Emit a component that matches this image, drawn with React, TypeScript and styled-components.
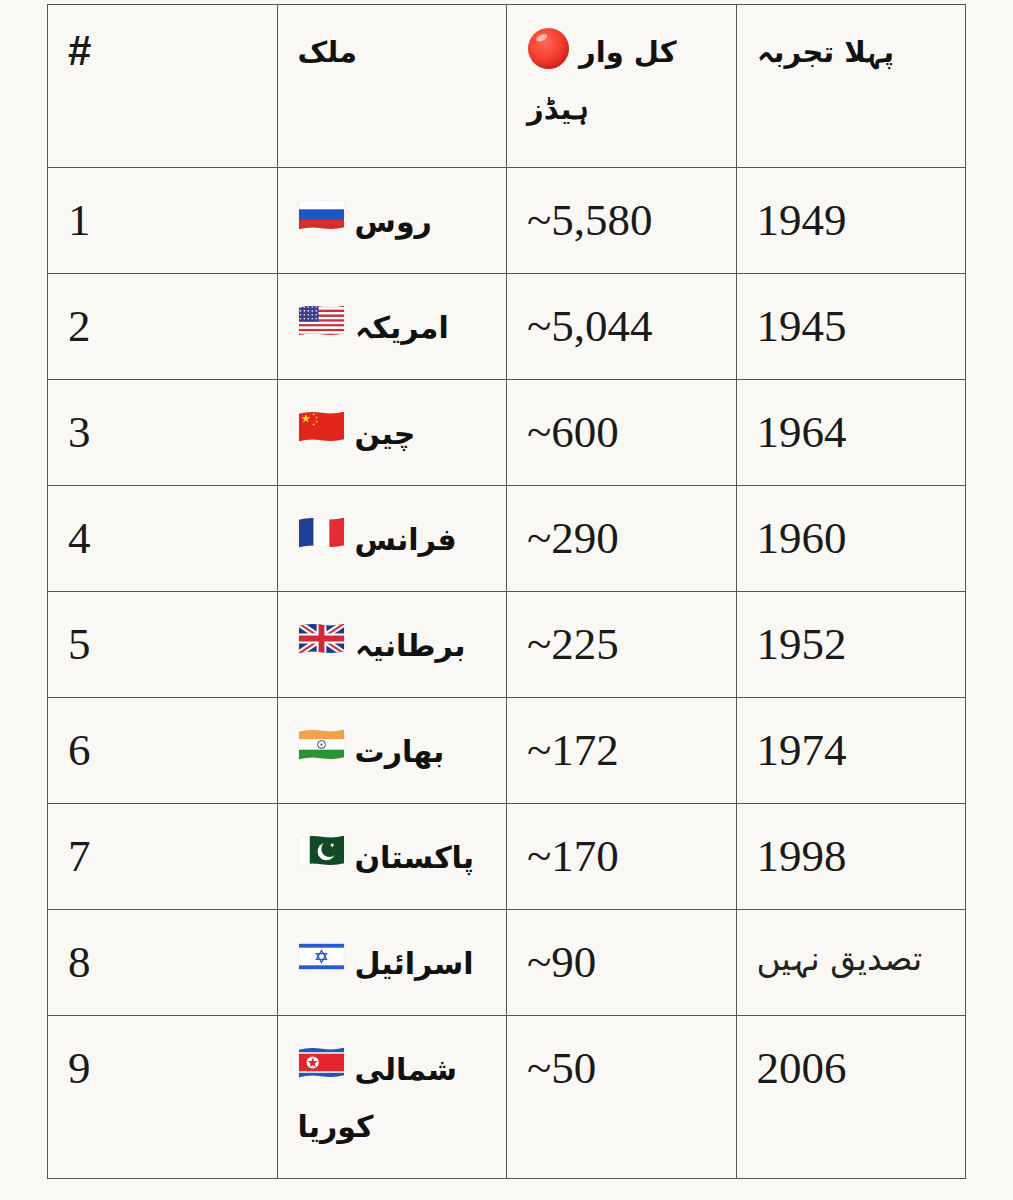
import styled, { createGlobalStyle } from "styled-components";
import type { ReactNode } from "react";

const GlobalStyle = createGlobalStyle`
    html, body {
        margin: 0;
        padding: 0;
        background-color: #f9f8f4;
    }
`;

const Page = styled.div`
    padding: 4px 47px 22px 47px;
    background-color: #f9f8f4;
    min-height: 1200px;
    box-sizing: border-box;
`;

const Table = styled.table`
    width: 919px;
    border-collapse: collapse;
    table-layout: fixed;
    color: #1a1a1a;
    font-family: "Liberation Serif", serif;
    font-size: 45px;
`;

const HeadCell = styled.th`
    border: 1px solid #555;
    padding: 17px 20px 31px 20px;
    line-height: 57px;
    height: 114px;
    text-align: left;
    vertical-align: top;
    font-family: "Liberation Sans", sans-serif;
    font-weight: bold;
    font-size: 42px;
`;

const Cell = styled.td`
    border: 1px solid #555;
    padding: 24px 20px;
    line-height: 57px;
    height: 57px;
    text-align: left;
    vertical-align: top;
    white-space: nowrap;
`;

const Urdu = styled.span<{ $light?: boolean; $head?: boolean }>`
    font-family: "DejaVu Sans", "Noto Sans", sans-serif;
    font-size: ${(p) => (p.$light ? "33px" : p.$head ? "29px" : "30px")};
    font-weight: ${(p) => (p.$light ? "normal" : "bold")};
    color: ${(p) => (p.$light ? "#222" : "#111")};
    line-height: 1;
    vertical-align: ${(p) => (p.$light ? "7px" : "3px")};
`;

const FlagSvg = styled.svg`
    width: 47px;
    height: 33px;
    vertical-align: 4px;
    margin-right: 10px;
`;

const DotSvg = styled.svg`
    width: 43px;
    height: 43px;
    vertical-align: -5px;
    margin-right: 9px;
`;

function star(cx: number, cy: number, r: number, rot = 0) {
    const pts: string[] = [];
    for (let i = 0; i < 10; i++) {
        const rad = i % 2 === 0 ? r : r * 0.4;
        const a = -Math.PI / 2 + (i * Math.PI) / 5 + rot;
        pts.push(`${(cx + rad * Math.cos(a)).toFixed(2)},${(cy + rad * Math.sin(a)).toFixed(2)}`);
    }
    return pts.join(" ");
}

const flagArt: Record<string, ReactNode> = {
    ru: (
        <>
            <rect width="48" height="11" fill="#ffffff" />
            <rect y="10.7" width="48" height="11" fill="#1c57c4" />
            <rect y="21.3" width="48" height="11" fill="#d92d2d" />
        </>
    ),
    us: (
        <>
            {Array.from({ length: 13 }).map((_, i) => (
                <rect key={i} y={(i * 32) / 13} width="48" height={32 / 13 + 0.1} fill={i % 2 === 0 ? "#c8313e" : "#ffffff"} />
            ))}
            <rect width="21" height="17.2" fill="#3b3f8f" />
            {Array.from({ length: 20 }).map((_, i) => (
                <circle key={i} cx={2.5 + (i % 5) * 4} cy={2.2 + Math.floor(i / 5) * 4} r="0.8" fill="#ffffff" />
            ))}
        </>
    ),
    cn: (
        <>
            <rect width="48" height="32" fill="#e3261c" />
            <polygon points={star(8, 8, 4.8)} fill="#ffde00" />
            <polygon points={star(16, 3.5, 1.5, 0.6)} fill="#ffde00" />
            <polygon points={star(19, 6.8, 1.5, 0.3)} fill="#ffde00" />
            <polygon points={star(19, 11, 1.5)} fill="#ffde00" />
            <polygon points={star(16, 14, 1.5, 0.7)} fill="#ffde00" />
        </>
    ),
    fr: (
        <>
            <rect width="16" height="32" fill="#1f3f99" />
            <rect x="16" width="16" height="32" fill="#ffffff" />
            <rect x="32" width="16" height="32" fill="#e32b33" />
        </>
    ),
    gb: (
        <>
            <rect width="48" height="32" fill="#1f3a8a" />
            <path d="M0 0 L48 32 M48 0 L0 32" stroke="#ffffff" strokeWidth="6.5" />
            <path d="M0 0 L48 32 M48 0 L0 32" stroke="#d1283a" strokeWidth="2" />
            <path d="M24 0 V32 M0 16 H48" stroke="#ffffff" strokeWidth="10" />
            <path d="M24 0 V32 M0 16 H48" stroke="#d1283a" strokeWidth="6" />
        </>
    ),
    in: (
        <>
            <rect width="48" height="11" fill="#f7a04a" />
            <rect y="10.7" width="48" height="11" fill="#ffffff" />
            <rect y="21.3" width="48" height="11" fill="#2b9135" />
            <circle cx="24" cy="16" r="4" fill="none" stroke="#2a3a8c" strokeWidth="1" />
            <circle cx="24" cy="16" r="1" fill="#2a3a8c" />
        </>
    ),
    pk: (
        <>
            <rect width="12" height="32" fill="#ffffff" />
            <rect x="12" width="36" height="32" fill="#114a24" />
            <circle cx="29" cy="17" r="9" fill="#ffffff" />
            <circle cx="32" cy="14.5" r="8.2" fill="#114a24" />
            <polygon points={star(35, 10.5, 2.6, 0.5)} fill="#ffffff" />
        </>
    ),
    il: (
        <>
            <rect width="48" height="32" fill="#ffffff" />
            <rect y="3" width="48" height="4" fill="#2a5bd0" />
            <rect y="25" width="48" height="4" fill="#2a5bd0" />
            <polygon points="24,10 29.2,19 18.8,19" fill="none" stroke="#2a5bd0" strokeWidth="1.3" />
            <polygon points="24,22 29.2,13 18.8,13" fill="none" stroke="#2a5bd0" strokeWidth="1.3" />
        </>
    ),
    kp: (
        <>
            <rect width="48" height="32" fill="#1f56b8" />
            <rect y="5.5" width="48" height="21" fill="#ffffff" />
            <rect y="7" width="48" height="18" fill="#e3262d" />
            <circle cx="15" cy="16" r="6.2" fill="#ffffff" />
            <polygon points={star(15, 16.4, 5.6)} fill="#e3262d" />
        </>
    ),
};

function Flag(props: { code: string }) {
    const clipId = `clip-${props.code}`;
    return (
        <FlagSvg viewBox="0 0 48 32" aria-hidden="true">
            <defs>
                <clipPath id={clipId}>
                    <path d="M1 3 Q12 0 24 2 T47 1 L47 29 Q36 32 24 30 T1 31 Z" />
                </clipPath>
            </defs>
            <g clipPath={`url(#${clipId})`}>{flagArt[props.code]}</g>
            {/* soft edge so the white stripes read against the page */}
            <path d="M1 3 Q12 0 24 2 T47 1 L47 29 Q36 32 24 30 T1 31 Z" fill="none" stroke="#000" strokeOpacity="0.08" strokeWidth="0.6" />
        </FlagSvg>
    );
}

function RedDot() {
    return (
        <DotSvg viewBox="0 0 44 44" aria-hidden="true">
            <defs>
                <radialGradient id="dotGrad" cx="40%" cy="35%" r="65%">
                    <stop offset="0%" stopColor="#ff6a55" />
                    <stop offset="70%" stopColor="#f2392b" />
                    <stop offset="100%" stopColor="#c7251b" />
                </radialGradient>
            </defs>
            <circle cx="22" cy="22" r="21" fill="url(#dotGrad)" />
            <ellipse cx="15" cy="11" rx="6" ry="3" fill="#ffffff" opacity="0.55" transform="rotate(-25 15 11)" />
        </DotSvg>
    );
}

type Row = { rank: number; code: string; name: string[]; warheads: string; first: string; unconfirmed?: boolean };

const rows: Row[] = [
    { rank: 1, code: "ru", name: ["روس"], warheads: "~5,580", first: "1949" },
    { rank: 2, code: "us", name: ["امریکہ"], warheads: "~5,044", first: "1945" },
    { rank: 3, code: "cn", name: ["چین"], warheads: "~600", first: "1964" },
    { rank: 4, code: "fr", name: ["فرانس"], warheads: "~290", first: "1960" },
    { rank: 5, code: "gb", name: ["برطانیہ"], warheads: "~225", first: "1952" },
    { rank: 6, code: "in", name: ["بھارت"], warheads: "~172", first: "1974" },
    { rank: 7, code: "pk", name: ["پاکستان"], warheads: "~170", first: "1998" },
    { rank: 8, code: "il", name: ["اسرائیل"], warheads: "~90", first: "تصدیق نہیں", unconfirmed: true },
    { rank: 9, code: "kp", name: ["شمالی", "کوریا"], warheads: "~50", first: "2006" },
];

export default function App() {
    return (
        <Page>
            <GlobalStyle />
            <Table>
                <thead>
                    <tr>
                        <HeadCell>#</HeadCell>
                        <HeadCell>
                            <Urdu $head>ملک</Urdu>
                        </HeadCell>
                        <HeadCell>
                            <RedDot />
                            <Urdu $head>کل وار</Urdu>
                            <br />
                            <Urdu $head>ہیڈز</Urdu>
                        </HeadCell>
                        <HeadCell>
                            <Urdu $head>پہلا تجربہ</Urdu>
                        </HeadCell>
                    </tr>
                </thead>
                <tbody>
                    {rows.map((row) => (
                        <tr key={row.rank}>
                            <Cell>{row.rank}</Cell>
                            <Cell>
                                <Flag code={row.code} />
                                <Urdu>{row.name[0]}</Urdu>
                                {row.name[1] && (
                                    <>
                                        <br />
                                        <Urdu>{row.name[1]}</Urdu>
                                    </>
                                )}
                            </Cell>
                            <Cell>{row.warheads}</Cell>
                            <Cell>{row.unconfirmed ? <Urdu $light>{row.first}</Urdu> : row.first}</Cell>
                        </tr>
                    ))}
                </tbody>
            </Table>
        </Page>
    );
}
